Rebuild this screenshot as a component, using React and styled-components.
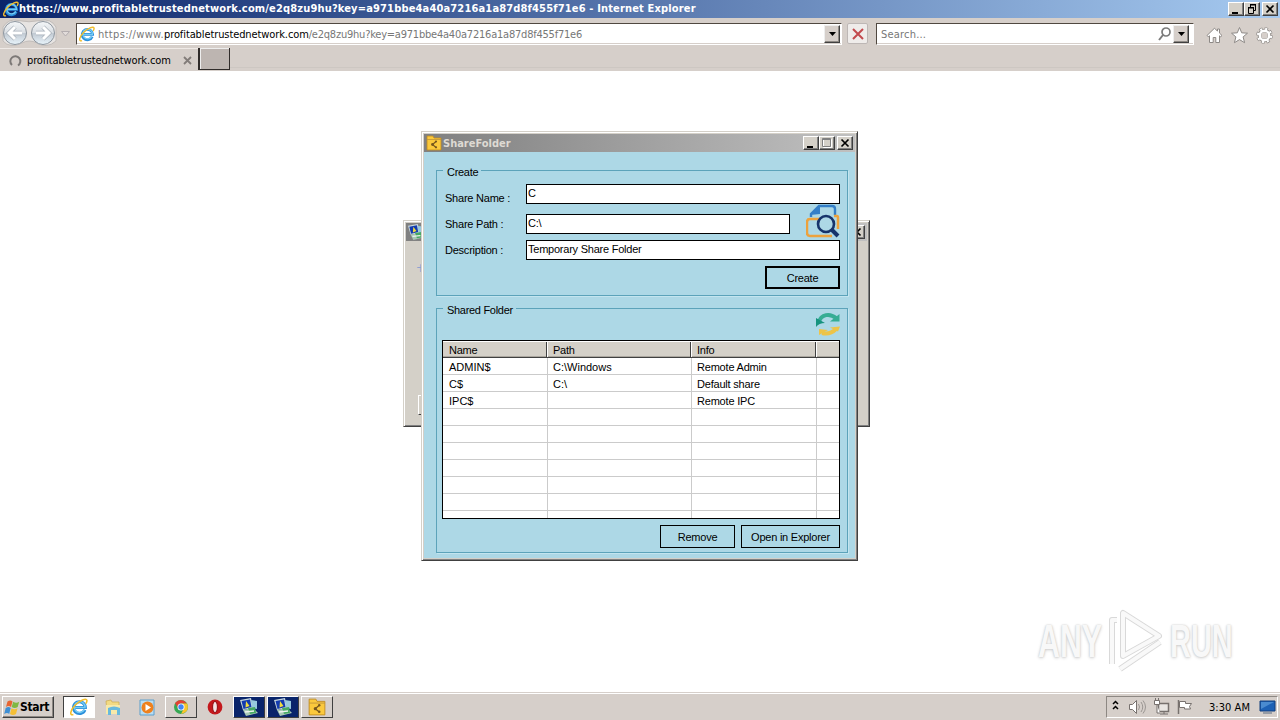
import React from 'react';
import styled, { createGlobalStyle } from 'styled-components';

const GlobalStyle = createGlobalStyle`
  * {
    box-sizing: border-box;
  }

  body {
    margin: 0;
    overflow: hidden;
    background: #fff;
  }
`;

const tahoma = `'DejaVu Sans Condensed', 'DejaVu Sans', sans-serif`;
const sans = `'Liberation Sans', Arial, sans-serif`;

const Desktop = styled.div`
  position: relative;
  display: flex;
  flex-direction: column;
  width: 1280px;
  height: 720px;
  overflow: hidden;
  background: #fff;
  color: #000;
  font-family: ${tahoma};
  font-size: 11px;
  white-space: nowrap;
`;

const TitleBar = styled.div`
  display: flex;
  align-items: center;
  height: 18px;
  padding: 0 2px 0 3px;
  color: #fff;
  background: linear-gradient(90deg, #0a246a, #a6caf0);
`;

const BrowserTitle = styled.div`
  flex: 1;
  font-size: 11px;
  font-weight: bold;
  line-height: 18px;
  letter-spacing: 0.16px;
`;

const CaptionButtons = styled.div`
  display: flex;
`;

const CaptionButton = styled.div`
  display: flex;
  width: 16px;
  height: 14px;
  margin-left: ${props => props.$gap || 0}px;
  background: #d4d0c8;
  border: 1px solid;
  border-color: #fff #404040 #404040 #fff;
  box-shadow: inset -1px -1px #808080;
`;

const NavBar = styled.div`
  display: flex;
  align-items: flex-start;
  height: 30px;
  padding-left: 2px;
  background: #d6cfca;
`;

const NavArrows = styled.div`
  width: 74px;
  height: 30px;
`;

const Field = styled.div`
  display: flex;
  align-items: center;
  width: ${props => props.$width}px;
  height: 22px;
  margin: 5px ${props => props.$gap}px 0 0;
  padding: 0 ${props => props.$end || 1}px 0 2px;
  background: #fff;
  border: 1px solid;
  border-color: #504840 #fff #fff #504840;
  box-shadow: inset 0 -1px #d6cfca;
  color: #777;
`;

const FieldText = styled.div`
  flex: 1;
  margin-left: ${props => props.$left || 2}px;
  letter-spacing: ${props => props.$spacing || 0}px;
`;

const UrlPart = styled.span`
  color: ${props => (props.$strong ? '#000' : '#777')};
  letter-spacing: ${props => props.$spacing}px;
`;

const DropButton = styled.div`
  display: flex;
  align-items: center;
  justify-content: center;
  width: 16px;
  height: 18px;
  background: #d6cfca;
  border: 1px solid;
  border-color: #eee #404040 #404040 #eee;
  box-shadow: inset -1px -1px #8d8883;
`;

const StopButton = styled.div`
  display: flex;
  align-items: center;
  justify-content: center;
  width: 21px;
  height: 21px;
  margin: 5px 8px 0 0;
  background: #efecea;
  border: 1px solid #bdb7b5;
  border-radius: 2px;
`;

const Tools = styled.div`
  display: flex;
  gap: 8px;
  padding: 9px 0 0 12px;
`;

const TabBar = styled.div`
  display: flex;
  height: 23px;
  background: #d6cfca;
`;

const Tab = styled.div`
  display: flex;
  align-items: center;
  width: 198px;
  padding: 1px 4px 0 8px;
  border-top: 1px solid #efeae7;
`;

const TabName = styled.div`
  width: 156px;
  margin-left: 5px;
  letter-spacing: -0.14px;
`;

const NewTab = styled.div`
  width: 32px;
  height: 22px;
  background: #bdb5b1;
  border: solid #302c2a;
  border-width: 0 1px 1px 2px;
  box-shadow: inset 1px 1px #eee;
`;

const TabRest = styled.div`
  flex: 1;
  height: 20px;
  border-bottom: 1px solid #cdc7c2;
`;

const Page = styled.div`
  flex: 1;
  background: #fff;
`;

const Window = styled.div`
  position: absolute;
  left: ${props => props.$x}px;
  top: ${props => props.$y}px;
  display: flex;
  flex-direction: column;
  width: ${props => props.$width}px;
  height: ${props => props.$height}px;
  padding: 2px;
  background: #d4d0c8;
  border: 1px solid;
  border-color: #d4d0c8 #404040 #404040 #d4d0c8;
  box-shadow: inset 1px 1px #fff, inset -1px -1px #808080;
`;

const WindowTitle = styled.div`
  display: flex;
  flex-shrink: 0;
  align-items: center;
  height: 18px;
  padding: 0 2px;
  color: #dedad3;
  background: linear-gradient(90deg, #808080, #c0c0c0);
  font-weight: bold;
`;

const WindowName = styled.div`
  flex: 1;
  margin-left: 1px;
  padding-top: 1px;
`;

const HiddenBody = styled.div`
  display: flex;
  flex: 1;
  flex-direction: column;
  justify-content: space-between;
  padding: 20px 0 9px 10px;
  color: #8da3d0;
  font-size: 12px;
`;

const HiddenButton = styled.div`
  width: 70px;
  height: 20px;
  margin-left: 2px;
  border: 1px solid;
  border-color: #fff #404040 #404040 #fff;
`;

const DialogBody = styled.div`
  flex: 1;
  min-height: 0;
  padding: 12px 7px 0 12px;
  background: #add8e6;
  font-family: ${sans};
  line-height: 13px;
  letter-spacing: -0.23px;
`;

const Group = styled.fieldset`
  width: 412px;
  height: ${props => props.$height}px;
  min-width: 0;
  margin: 0;
  padding: 0 7px 0 ${props => props.$left}px;
  border: 1px solid #5ca3ba;
  box-shadow: 1px 1px #c3e5ef;

  & + & {
    margin-top: 6px;
  }
`;

const Legend = styled.legend`
  height: 13px;
  margin-left: ${props => props.$shift || 0}px;
  padding: 2px 3px 0 4px;
  letter-spacing: -0.3px;
`;

const FormRow = styled.div`
  display: flex;
  align-items: flex-start;
  height: 20px;
  margin-top: ${props => props.$top}px;
`;

const FormLabel = styled.label`
  width: 83px;
  padding: ${props => props.$top}px 0 0 2px;
`;

const TextBox = styled.div`
  width: ${props => props.$width}px;
  height: 20px;
  padding: 2px 0 0 1px;
  background: #fff;
  border: 1px solid #000;
`;

const BrowseIcon = styled.svg`
  margin: -10px 0 0 16px;
`;

const Buttons = styled.div`
  display: flex;
  justify-content: flex-end;
  gap: 6px;
  margin-top: 6px;
`;

const DialogButton = styled.div`
  display: flex;
  align-items: center;
  justify-content: center;
  width: ${props => props.$width}px;
  height: 23px;
  padding-top: 1px;
  border: ${props => (props.$focused ? 2 : 1)}px solid #000;
`;

const RefreshRow = styled.div`
  display: flex;
  justify-content: flex-end;
  height: 25px;

  svg {
    margin-top: -3px;
  }
`;

const Grid = styled.div`
  width: 398px;
  height: 179px;
  overflow: hidden;
  background: #fff;
  border: 1px solid #000;
`;

const GridRow = styled.div`
  display: grid;
  grid-template-columns: 105px 144px 125px 22px;
  height: 17px;
`;

const HeadCell = styled.div`
  position: relative;
  padding: 3px 0 0 6px;
  background: #d4d0c8;
  border-bottom: 1px solid #404040;
  box-shadow: inset 0 1px #fff, inset 0 -1px #aaa69e;

  &:not(:first-child) {
    padding-left: 5px;
  }

  &:not(:last-child)::after {
    content: '';
    position: absolute;
    top: 1px;
    right: 0;
    width: 2px;
    height: 15px;
    background: linear-gradient(90deg, #404040 50%, #fff 50%);
  }
`;

const Cell = styled.div`
  padding: 3px 0 0 6px;
  border-bottom: 1px solid #cbcbcb;
  border-right: 1px solid #cbcbcb;
  letter-spacing: ${props => props.$spacing || 0}px;

  &:not(:first-child) {
    padding-left: 5px;
  }

  &:last-child {
    border-right: 0;
  }
`;

const Watermark = styled.div`
  position: absolute;
  left: 1038px;
  top: 606px;
  display: flex;
  align-items: center;
  width: 196px;
  height: 68px;
`;

const WatermarkText = styled.div`
  width: ${props => props.$width}px;
  padding-top: 2px;
  color: #f8f8f8;
  font-family: ${sans};
  font-size: 46px;
  font-weight: bold;
  line-height: 68px;
  transform: scaleX(${props => props.$scale});
  transform-origin: left;
  text-shadow: 0 0 2px #c6c6c6, 0 1px 4px #cfcfcf;
`;

const Taskbar = styled.div`
  display: flex;
  align-items: flex-start;
  height: 28px;
  padding: 2px 2px 0;
  background: #d6cfca;
  border-top: 1px solid #d6cfca;
  box-shadow: inset 0 1px #fff;
`;

const StartButton = styled.div`
  display: flex;
  align-items: center;
  width: 52px;
  height: 22px;
  margin: 1px 9px 0 0;
  padding-left: 1px;
  border: 1px solid;
  border-color: #fff #404040 #404040 #fff;
  box-shadow: inset -1px -1px #8d8883;
  font-size: 12px;
  font-weight: bold;
  letter-spacing: -0.3px;
`;

const TaskButton = styled.div`
  display: flex;
  align-items: center;
  justify-content: center;
  width: 32px;
  height: 22px;
  margin: 1px 2px 0 0;
  background: ${props => props.$fill || 'transparent'};
  border: 1px solid;
  border-color: ${props => (props.$pressed ? '#404040 #fff #fff #404040' : '#fff #404040 #404040 #fff')};
  ${props => props.$flat && 'border-color: transparent;'}
`;

const Tray = styled.div`
  display: flex;
  align-items: center;
  width: 172px;
  height: 22px;
  margin: 1px 0 0 auto;
  padding: 0 0 0 5px;
  border: 1px solid;
  border-color: #8d8883 #fff #fff #8d8883;
`;

const Clock = styled.div`
  width: 50px;
  margin-left: 15px;
  letter-spacing: 0.05px;
`;

const IeIcon = ({ size = 16 }) => (
  <svg width={size} height={size} viewBox="0 0 16 16" fill="none">
    <path d="M13.2 10.6A5.2 5.2 0 1 1 13.6 8.4H4" stroke="#2b8fdb" strokeWidth="2.8" />
    <path d="M12.8 10.4A4.8 4.8 0 1 1 13.4 8.4H4" stroke="#74cbf4" strokeWidth="1.3" />
    <path d="M3 14.7C-.7 15.8.2 11 4.5 6.5C8.8 2 14.4-.1 15 2c.3 1-.3 2.1-.9 3" stroke="#f2bd2c" strokeWidth="1.4" />
  </svg>
);

const FolderIcon = ({ size = 16 }) => (
  <svg width={size} height={size} viewBox="0 0 16 16">
    <path d="M1 1h6l1 2h7v12H1z" fill="#fbc93c" stroke="#c08b20" strokeWidth=".8" />
    <path d="M1 4.5h14" stroke="#c0943a" strokeWidth=".8" />
    <path d="M10 6.5L6.5 9.5l3.5 3" stroke="#77571d" strokeWidth="1.1" fill="none" />
    <circle cx="10" cy="6.5" r="1.1" fill="#77571d" />
    <circle cx="6.5" cy="9.5" r="1.4" fill="#77571d" />
    <circle cx="10" cy="12.3" r="1.1" fill="#77571d" />
  </svg>
);

const ComputerIcon = ({ size = 18 }) => (
  <svg width={size} height={size} viewBox="0 0 18 18">
    <path d="M0 2l11-2 2 10-10 2z" fill="#c7d7dc" />
    <path d="M1.5 3l8.5-1.5 1.5 7.5-8 2z" fill="#123bb0" />
    <path d="M6 3l3.5 5-4 1.5z" fill="#f1dc3e" />
    <path d="M3 12l10-2 5 5-12 3z" fill="#a7c8b5" />
    <path d="M11 2l6 1v8l-5-1z" fill="#97c9dd" />
    <path d="M8 10l7-1 1 6-6 1z" fill="#46a963" />
    <path d="M5 14l9-1" stroke="#edf3ef" strokeWidth="1.5" />
  </svg>
);

const MinimizeGlyph = () => (
  <svg width="14" height="12"><path d="M3 9h6v2H3z" fill="#000" /></svg>
);

const CloseGlyph = () => (
  <svg width="14" height="12"><path d="M3.5 2.5l7 7M10.5 2.5l-7 7" stroke="#000" strokeWidth="1.7" /></svg>
);

const RestoreGlyph = () => (
  <svg width="14" height="12" fill="none" stroke="#000">
    <path d="M5 2h6M5.5 2v2M10.5 2v5.5H9M3 5h6M3.5 5v5.5h5V5" />
    <path d="M5 1.5h6M3 4.5h6" />
  </svg>
);

const MaximizeGlyph = () => (
  <svg width="14" height="12" fill="none">
    <path d="M3.5 2.5h8v8h-8z" stroke="#fff" />
    <path d="M2.5 1.5h8v8h-8zM2.5 2.5h8" stroke="#808080" />
  </svg>
);

const Triangle = () => (
  <svg width="7" height="4"><path d="M0 0h7L3.5 4z" fill="#000" /></svg>
);

const NavigationArrows = () => (
  <NavArrows>
    <svg width="74" height="30" fill="none">
      <defs>
        <linearGradient id="orb" x2="0" y2="1">
          <stop stopColor="#f5f7f9" />
          <stop offset=".48" stopColor="#d9dee3" />
          <stop offset=".52" stopColor="#c2cad3" />
          <stop offset="1" stopColor="#e8f4fb" />
        </linearGradient>
      </defs>
      <path d="M1 9Q7 0 16 2.5Q27 5 38 2.5Q49 0 54 9V23Q45 31 35 25Q27 21 20 25Q8 31 1 23z" fill="#e7e4e2" stroke="#c2bdba" />
      <circle cx="13" cy="15" r="11.5" fill="url(#orb)" stroke="#8e969f" />
      <circle cx="41" cy="15" r="11.5" fill="url(#orb)" stroke="#8e969f" />
      <path d="M20 15H8M13 9l-6 6 6 6" stroke="#a9b1ba" strokeWidth="4.4" />
      <path d="M20 15H8M13 9l-6 6 6 6" stroke="#fff" strokeWidth="3" />
      <path d="M34 15h12M41 9l6 6-6 6" stroke="#a9b1ba" strokeWidth="4.4" />
      <path d="M34 15h12M41 9l6 6-6 6" stroke="#fff" strokeWidth="3" />
      <path d="M59.5 13.5h8l-4 4.5z" stroke="#b4aeb0" fill="#e2dcda" />
    </svg>
  </NavArrows>
);

const SearchIcon = () => (
  <svg width="16" height="16" fill="none" stroke="#7b7b7b">
    <circle cx="9" cy="6" r="4" strokeWidth="1.7" />
    <path d="M6 9l-4 5" strokeWidth="2" />
  </svg>
);

const HomeIcon = () => (
  <svg width="17" height="17" viewBox="0 0 17 17" fill="#fff" stroke="#8d8986">
    <path d="M8.5 1.2L1 8.5l1.3 1.3 1.2-1v6.7h3.7v-5h2.6v5h3.7V8.8l1.2 1L16 8.5l-2.5-2.4V2h-2v2.2z" />
  </svg>
);

const StarIcon = () => (
  <svg width="17" height="17" viewBox="0 0 17 17" fill="#fff" stroke="#8d8986">
    <path d="M8.5.5l2.2 5.3 5.8.4-4.4 3.7 1.5 5.8-5.1-3.1-5.1 3.1 1.5-5.8L.5 6.2l5.8-.4z" />
  </svg>
);

const GearIcon = () => (
  <svg width="17" height="17" viewBox="0 0 17 17" fill="none">
    <circle cx="8.5" cy="8.5" r="6.6" stroke="#8d8986" strokeWidth="3.4" strokeDasharray="3.1 2.08" />
    <circle cx="8.5" cy="8.5" r="5" stroke="#8d8986" strokeWidth="3.6" />
    <circle cx="8.5" cy="8.5" r="6.6" stroke="#fff" strokeWidth="2.2" strokeDasharray="2.1 3.08" strokeDashoffset="-.5" />
    <circle cx="8.5" cy="8.5" r="4.7" stroke="#fff" strokeWidth="2.4" />
  </svg>
);

const FolderSearchIcon = () => (
  <BrowseIcon width="34" height="34" viewBox="0 0 34 34" fill="none">
    <path d="M5 13V10L13 2h13q3 0 3 3v6" stroke="#347fc8" strokeWidth="2.4" />
    <path d="M4 11L14 1v9z" fill="#347fc8" />
    <path d="M12 16V15H4q-3 0-3 3v11q0 3 3 3h22M28 12h3q1 0 1 2v11" stroke="#eda23d" strokeWidth="2.5" />
    <circle cx="20" cy="20" r="8" fill="#add8e6" stroke="#17346b" strokeWidth="2.6" />
    <path d="M26 26l6 6" stroke="#17346b" strokeWidth="4" />
  </BrowseIcon>
);

const RefreshIcon = () => (
  <svg width="24" height="24" viewBox="0 0 24 24" fill="none">
    <path d="M3 10C5 2 14 1 20 6" stroke="#35ad94" strokeWidth="4" />
    <path d="M14 9.5H23.5V2z" fill="#35ad94" />
    <path d="M0 15V6l9 5q-6 0-9 4z" fill="#16937e" />
    <path d="M6 21q8 2 14-4" stroke="#edc449" strokeWidth="4" />
    <path d="M14 15.5l10-1-2 5z" fill="#edc449" />
    <path d="M3 23v-6l9 1z" fill="#edc449" />
  </svg>
);

const WindowsLogo = () => (
  <svg width="16" height="17" viewBox="0 0 16 17">
    <path d="M3.5 2.5q3-2 5 0L7 8Q4.5 6 2 8z" fill="#e76532" />
    <path d="M9.2 2.8q3 2 6 0L13.7 8q-3 2-6 0z" fill="#80b844" />
    <path d="M1.7 9q3-2 5 0L5.2 15q-2-2-5 0z" fill="#3e8fd4" />
    <path d="M7.5 9.3q3 2 6 0L12 15q-3 2-6 0z" fill="#f4bf36" />
  </svg>
);

const ExplorerIcon = () => (
  <svg width="17" height="17" viewBox="0 0 17 17">
    <path d="M1 2l5-1 1 2h7v11H2z" fill="#f2da83" stroke="#cba94d" strokeWidth=".7" />
    <path d="M1 6h14v9H1z" fill="#f8e9a9" />
    <path d="M3 9q6-3 12 0v7h-3v-5H6v5H3z" fill="#68b9dd" />
  </svg>
);

const PlayerIcon = () => (
  <svg width="17" height="17" viewBox="0 0 17 17">
    <path d="M1 1h14v15H1z" fill="#b9ddf3" stroke="#5c9fcc" />
    <circle cx="8.5" cy="8.5" r="6" fill="#ee811e" />
    <path d="M6.5 5l5.5 3.5L6.5 12z" fill="#fff" />
  </svg>
);

const ChromeIcon = () => (
  <svg width="16" height="16" viewBox="0 0 16 16">
    <circle cx="8" cy="8" r="7" fill="#36a853" />
    <path d="M2 4Q8-2 14 4.5H8Q5 5 5 9z" fill="#e34133" />
    <path d="M14.2 4.5Q17 13 8 15l3-6-2-4.5z" fill="#fac52b" />
    <circle cx="8" cy="8" r="3.5" fill="#fff" />
    <circle cx="8" cy="8" r="2.7" fill="#4285f4" />
  </svg>
);

const OperaIcon = () => (
  <svg width="16" height="16" viewBox="0 0 16 16">
    <circle cx="8" cy="8" r="7.4" fill="#c4181c" />
    <ellipse cx="8" cy="8" rx="2.4" ry="5.6" fill="#f4e4e4" stroke="#8d0b12" />
  </svg>
);

const TrayIcons = () => (
  <svg width="82" height="18" fill="none" stroke="#77716e">
    <path d="M1 6L3.5 3.500 6 6M1 11l2.500-2.500L6 11" stroke="#000" strokeWidth="1.5" />
    <path d="M17.5 6.5h3l4-4v13l-4-4h-3z" fill="#fff" />
    <path d="M26.5 6q2 3 0 6M29 4q3.5 5 0 10M31 2.5q5 6.5 0 13" stroke="#9b9693" />
    <path d="M46.5 5.5h10v8h-10z" fill="#e9e6e3" strokeWidth="1.5" />
    <path d="M48 16h8M52 13v3" />
    <path d="M42.5 2.5h5v4h-5zM45 7v8h3M43.5 0v2M46.5 0v2" fill="#fff" />
    <path d="M66.5 2v14" strokeWidth="1.5" />
    <path d="M67.5 3.5h6v2h6l-2 3 1 2.5h-6v-1.5h-5z" fill="#fff" />
  </svg>
);

const MonitorIcon = () => (
  <svg width="17" height="16" viewBox="0 0 17 16">
    <path d="M1 2h15v10H1z" fill="#1d61b5" stroke="#123e7d" />
    <path d="M2 3h13L2 10z" fill="#4a8bd0" />
    <path d="M4 14h9" stroke="#596b80" />
  </svg>
);

const PlayMark = () => (
  <svg width="64" height="68" viewBox="0 0 64 68" fill="none" strokeLinejoin="round">
    <g stroke="#d9d9d9" strokeWidth="6">
      <path d="M17 7v43L53 30z" />
      <path d="M11 14H6v44M14 63l40-27" />
    </g>
    <g stroke="#f9f9f9" strokeWidth="4">
      <path d="M17 7v43L53 30z" />
      <path d="M11 14H6v44M14 63l40-27" />
    </g>
  </svg>
);

const shares = [
  { name: 'ADMIN$', path: 'C:\\Windows', info: 'Remote Admin' },
  { name: 'C$', path: 'C:\\', info: 'Default share' },
  { name: 'IPC$', path: '', info: 'Remote IPC' },
];

const ShareGrid = () => {
  const rows = [...shares, ...new Array(7).fill({})];

  return (
    <Grid>
      <GridRow>
        <HeadCell>Name</HeadCell>
        <HeadCell>Path</HeadCell>
        <HeadCell>Info</HeadCell>
        <HeadCell />
      </GridRow>
      {rows.map((row, index) => (
        <GridRow key={index}>
          <Cell>{row.name}</Cell>
          <Cell>{row.path}</Cell>
          <Cell $spacing={-0.2}>{row.info}</Cell>
          <Cell />
        </GridRow>
      ))}
    </Grid>
  );
};

const ShareDialog = () => (
  <Window $x={421} $y={131} $width={437} $height={430}>
    <WindowTitle>
      <FolderIcon />
      <WindowName>ShareFolder</WindowName>
      <CaptionButtons>
        <CaptionButton><MinimizeGlyph /></CaptionButton>
        <CaptionButton><MaximizeGlyph /></CaptionButton>
        <CaptionButton $gap={2}><CloseGlyph /></CaptionButton>
      </CaptionButtons>
    </WindowTitle>
    <DialogBody>
      <Group $height={132} $left={6}>
        <Legend>Create</Legend>
        <FormRow $top={7}>
          <FormLabel $top={8}>Share Name :</FormLabel>
          <TextBox $width={314}>C</TextBox>
        </FormRow>
        <FormRow $top={10}>
          <FormLabel $top={4}>Share Path :</FormLabel>
          <TextBox $width={264}>C:\</TextBox>
          <FolderSearchIcon />
        </FormRow>
        <FormRow $top={6}>
          <FormLabel $top={4}>Description :</FormLabel>
          <TextBox $width={314}>Temporary Share Folder</TextBox>
        </FormRow>
        <Buttons>
          <DialogButton $width={75} $focused>Create</DialogButton>
        </Buttons>
      </Group>
      <Group $height={251} $left={5}>
        <Legend $shift={1}>Shared Folder</Legend>
        <RefreshRow><RefreshIcon /></RefreshRow>
        <ShareGrid />
        <Buttons>
          <DialogButton $width={75}>Remove</DialogButton>
          <DialogButton $width={99}>Open in Explorer</DialogButton>
        </Buttons>
      </Group>
    </DialogBody>
  </Window>
);

const App = () => (
  <Desktop>
    <GlobalStyle />
    <TitleBar>
      <IeIcon />
      <BrowserTitle>
        https://www.profitabletrustednetwork.com/e2q8zu9hu?key=a971bbe4a40a7216a1a87d8f455f71e6 - Internet Explorer
      </BrowserTitle>
      <CaptionButtons>
        <CaptionButton><MinimizeGlyph /></CaptionButton>
        <CaptionButton><RestoreGlyph /></CaptionButton>
        <CaptionButton $gap={2}><CloseGlyph /></CaptionButton>
      </CaptionButtons>
    </TitleBar>
    <NavBar>
      <NavigationArrows />
      <Field $width={766} $gap={5}>
        <IeIcon />
        <FieldText $left={3}>
          <UrlPart $spacing={0.34}>https://www.</UrlPart>
          <UrlPart $strong $spacing={-0.1}>profitabletrustednetwork.com</UrlPart>
          <UrlPart $spacing={-0.22}>/e2q8zu9hu?key=a971bbe4a40a7216a1a87d8f455f71e6</UrlPart>
        </FieldText>
        <DropButton><Triangle /></DropButton>
      </Field>
      <StopButton>
        <svg width="12" height="12"><path d="M1 1l10 10M11 1L1 11" stroke="#c24a4e" strokeWidth="2" /></svg>
      </StopButton>
      <Field $width={318} $gap={0} $end={4}>
        <FieldText $spacing={0.2}>Search...</FieldText>
        <SearchIcon />
        <DropButton><Triangle /></DropButton>
      </Field>
      <Tools>
        <HomeIcon />
        <StarIcon />
        <GearIcon />
      </Tools>
    </NavBar>
    <TabBar>
      <Tab>
        <svg width="14" height="14" fill="none"><path d="M4 11A5 5 0 1 1 10 11.5" stroke="#7d7977" strokeWidth="2" /></svg>
        <TabName>profitabletrustednetwork.com</TabName>
        <svg width="9" height="9"><path d="M1 1l7 7M8 1L1 8" stroke="#827c79" strokeWidth="1.8" /></svg>
      </Tab>
      <NewTab />
      <TabRest />
    </TabBar>
    <Page />
    <Window $x={403} $y={220} $width={467} $height={207}>
      <WindowTitle>
        <ComputerIcon size={16} />
        <WindowName />
        <CaptionButton><CloseGlyph /></CaptionButton>
      </WindowTitle>
      <HiddenBody>
        <span>+</span>
        <HiddenButton />
      </HiddenBody>
    </Window>
    <ShareDialog />
    <Watermark>
      <WatermarkText $width={68} $scale={0.66}>ANY</WatermarkText>
      <PlayMark />
      <WatermarkText $width={64} $scale={0.63}>RUN</WatermarkText>
    </Watermark>
    <Taskbar>
      <StartButton><WindowsLogo />Start</StartButton>
      <TaskButton $pressed $fill="#fff"><IeIcon size={18} /></TaskButton>
      <TaskButton $flat><ExplorerIcon /></TaskButton>
      <TaskButton $flat><PlayerIcon /></TaskButton>
      <TaskButton><ChromeIcon /></TaskButton>
      <TaskButton $flat><OperaIcon /></TaskButton>
      <TaskButton $fill="#0a246a"><ComputerIcon /></TaskButton>
      <TaskButton $fill="#0a246a"><ComputerIcon /></TaskButton>
      <TaskButton><FolderIcon size={18} /></TaskButton>
      <Tray>
        <TrayIcons />
        <Clock>3:30 AM</Clock>
        <MonitorIcon />
      </Tray>
    </Taskbar>
  </Desktop>
);

export default App;
